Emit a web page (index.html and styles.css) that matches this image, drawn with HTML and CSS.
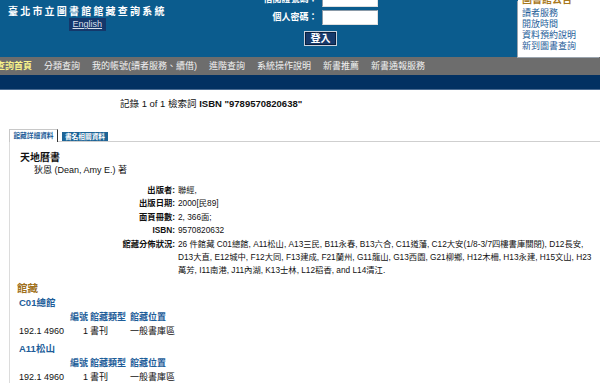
FILE: index.html
```html
<!DOCTYPE html>
<html lang="zh-Hant">
<head>
<meta charset="utf-8">
<title>臺北市立圖書館館藏查詢系統</title>
<link rel="stylesheet" href="styles.css">
</head>
<body>
<header class="header">
  <div class="brand">
    <div class="title">臺北市立圖書館館藏查詢系統</div>
    <a class="lang" href="#">English</a>
  </div>
  <form class="login">
    <label class="lbl">借閱證號碼：</label><span class="inp"></span>
    <label class="lbl">個人密碼：</label><span class="inp"></span>
    <span class="btn">登入</span>
  </form>
  <aside class="notice">
    <div class="notice-title">圖書館公告</div>
    <a href="#">讀者服務</a>
    <a href="#">開放時間</a>
    <a href="#">資料預約說明</a>
    <a href="#">新到圖書查詢</a>
  </aside>
</header>
<nav class="nav">
  <a class="cur" href="#">查詢首頁</a>
  <a href="#">分類查詢</a>
  <a href="#">我的帳號(讀者服務、續借)</a>
  <a href="#">進階查詢</a>
  <a href="#">系統操作說明</a>
  <a href="#">新書推薦</a>
  <a href="#">新書通報服務</a>
</nav>
<div class="navline"></div>
<main class="main">
  <div class="search">記錄 1 of 1 檢索詞 <b>ISBN "9789570820638"</b></div>
  <div class="tabs">
    <span class="tab active">館藏詳細資料</span>
    <span class="tab other">書名相關資料</span>
  </div>
  <section class="panel">
    <div class="btitle">天地曆書</div>
    <div class="author">狄恩 (Dean, Amy E.) 著</div>
    <div class="detail">
      <div class="k">出版者:</div><div class="v">聯經,</div>
      <div class="k">出版日期:</div><div class="v">2000[民89]</div>
      <div class="k">面頁冊數:</div><div class="v">2, 366面;</div>
      <div class="k">ISBN:</div><div class="v">9570820632</div>
      <div class="k">館藏分佈狀況:</div><div class="v multi">26 件館藏 C01總館, A11松山, A13三民, B11永春, B13六合, C11道藩, C12大安(1/8-3/7四樓書庫關閉), D12長安, D13大直, E12城中, F12大同, F13建成, F21蘭州, G11龍山, G13西園, G21柳鄉, H12木柵, H13永建, H15文山, H23萬芳, I11南港, J11內湖, K13士林, L12稻香, and L14清江.</div>
    </div>
    <div class="hold-title">館藏</div>
    <div class="branch">C01總館</div>
    <div class="hold">
      <span></span><span class="h num">編號</span><span class="h c3">館藏類型</span><span class="h">館藏位置</span>
      <span>192.1 4960</span><span class="num">1</span><span class="c3">書刊</span><span>一般書庫區</span>
    </div>
    <div class="branch">A11松山</div>
    <div class="hold">
      <span></span><span class="h num">編號</span><span class="h c3">館藏類型</span><span class="h">館藏位置</span>
      <span>192.1 4960</span><span class="num">1</span><span class="c3">書刊</span><span>一般書庫區</span>
    </div>
  </section>
</main>
</body>
</html>
```
FILE: styles.css
```css
html, body {
  margin: 0;
  padding: 0;
}
body {
  width: 600px;
  height: 383px;
  overflow: hidden;
  background: #fff;
  color: #111;
  font-family: "Liberation Sans", "Noto Sans CJK TC", sans-serif;
  font-size: 8.3px;
}
a { text-decoration: none; }

/* header */
.header {
  height: 57px;
  background: #0b5c8e;
  display: flex;
  align-items: flex-start;
}
.brand {
  margin-left: 8px;
  padding-top: 6px;
  display: flex;
  flex-direction: column;
  align-items: center;
}
.title {
  color: #fff;
  font-weight: bold;
  font-size: 10px;
  line-height: 12px;
  letter-spacing: 2.2px;
}
.lang {
  background: #14386b;
  color: #d8dfea;
  text-decoration: underline;
  font-size: 9px;
  line-height: 13px;
  height: 13px;
  padding: 0 3.5px;
}
.login {
  margin: -8px 0 0 97px;
  display: grid;
  grid-template-columns: auto 56px;
  column-gap: 4px;
  row-gap: 3px;
  grid-auto-rows: 15px;
}
.lbl {
  color: #fff;
  font-weight: bold;
  font-size: 9px;
  line-height: 15px;
  text-align: right;
}
.inp {
  background: #fff;
  border: 1px solid #8a9aa8;
  border-right-color: #e0e0e0;
  border-bottom-color: #e0e0e0;
  box-sizing: border-box;
}
.btn {
  grid-column: 1 / 3;
  justify-self: center;
  margin-top: 3px;
  width: 33px;
  height: 15px;
  box-sizing: border-box;
  border: 1px solid #c9d2de;
  box-shadow: inset 0 0 0 1px #0a1f3f;
  background: #163a6c;
  color: #fff;
  font-weight: bold;
  font-size: 10px;
  line-height: 13px;
  text-align: center;
}
.notice {
  margin-left: auto;
  width: 82px;
  height: 57px;
  box-sizing: border-box;
  background: #fff;
  box-shadow: -1px 1px 0 #9aa4ae;
  padding-left: 4px;
  display: flex;
  flex-direction: column;
  overflow: hidden;
}
.notice-title {
  margin-top: -6px;
  margin-bottom: 3px;
  color: #a8781e;
  font-weight: bold;
  font-size: 10px;
  line-height: 11px;
}
.notice a {
  color: #1d5d99;
  font-size: 9px;
  line-height: 11px;
}

/* nav */
.nav {
  height: 18px;
  background: #6d6d6d;
  display: flex;
  align-items: center;
  gap: 12px;
  white-space: nowrap;
  overflow: hidden;
}
.nav a {
  color: #f2f2f2;
  font-size: 9px;
  line-height: 18px;
}
.nav a.cur {
  margin-left: -4px;
  color: #f8f28a;
  font-weight: bold;
}
.navline {
  height: 14px;
  background: #023162;
  border-bottom: 1px solid #4a6b92;
}

/* main */
.search {
  margin-top: 7px;
  padding-left: 120px;
  font-size: 9.5px;
  line-height: 13px;
  color: #111;
}
.search b { font-weight: bold; }
.tabs {
  margin: 19px 0 0 9px;
  display: flex;
  align-items: flex-end;
}
.tab {
  font-size: 6.7px;
  font-weight: bold;
  text-align: center;
  box-sizing: border-box;
  white-space: nowrap;
}
.tab.active {
  position: relative;
  width: 49px;
  height: 13px;
  margin-bottom: -1px;
  background: #fff;
  border-top: 1px solid #c8c8c8;
  border-left: 1px solid #c8c8c8;
  border-right: 1px solid #333;
  color: #1d5d99;
  line-height: 11px;
}
.tab.other {
  margin-left: 4px;
  width: 46px;
  height: 9px;
  background: #1d6496;
  color: #fff;
  line-height: 9px;
}
.panel {
  margin-left: 9px;
  border-top: 1px solid #cfcfcf;
  border-left: 1px solid #dcdcdc;
  padding: 9px 0 30px 10px;
}
.btitle {
  font-size: 10px;
  font-weight: bold;
  line-height: 13px;
}
.author {
  padding-left: 14px;
  font-size: 9px;
  line-height: 13px;
}
.detail {
  margin: 6.5px 0 0 79px;
  display: grid;
  grid-template-columns: 76px 417px;
  column-gap: 3px;
  line-height: 13.6px;
}
.k {
  font-weight: bold;
  text-align: right;
  white-space: nowrap;
}
.v.multi {
  line-height: 12.8px;
  padding-top: 0.4px;
}
.hold-title {
  margin: 5px 0 0 -3px;
  color: #a0711c;
  font-weight: bold;
  font-size: 10.5px;
  line-height: 13px;
}
.branch {
  margin: 1px 0 0 -1px;
  color: #1d5d99;
  font-weight: bold;
  font-size: 9.5px;
  line-height: 13px;
}
.hold + .branch { margin-top: 3.5px; }
.hold {
  margin: 2.5px 0 0 -1px;
  display: grid;
  grid-template-columns: 47px 22px 42px auto;
  grid-auto-rows: 13px;
  row-gap: 1px;
  line-height: 13px;
  font-size: 9px;
}
.hold .h {
  color: #1d5d99;
  font-weight: bold;
  font-size: 9px;
}
.hold .num { text-align: right; }
.hold .c3 { padding-left: 2px; }
```
